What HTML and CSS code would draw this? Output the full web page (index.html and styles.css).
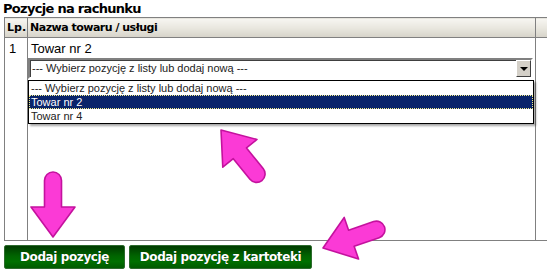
FILE: index.html
```html
<!DOCTYPE html>
<html>
<head>
<meta charset="utf-8">
<title>Pozycje na rachunku</title>
<link rel="stylesheet" href="styles.css">
</head>
<body>
<h1 class="title">Pozycje na rachunku</h1>
<table class="items">
	<thead>
		<tr>
			<th class="lp">Lp.</th>
			<th class="name">Nazwa towaru / usługi</th>
			<th class="extra"></th>
		</tr>
	</thead>
	<tbody>
		<tr>
			<td class="lp">1</td>
			<td class="name">
				<div class="item-name">Towar nr 2</div>
				<div class="combo">
					<span class="combo-text">--- Wybierz pozycję z listy lub dodaj nową ---</span>
					<span class="combo-btn"></span>
					<ul class="combo-list">
						<li>--- Wybierz pozycję z listy lub dodaj nową ---</li>
						<li class="sel">Towar nr 2</li>
						<li>Towar nr 4</li>
					</ul>
				</div>
			</td>
			<td class="extra"></td>
		</tr>
	</tbody>
</table>
<div class="actions">
	<button class="btn btn-add">Dodaj pozycję</button>
	<button class="btn btn-cat">Dodaj pozycję z kartoteki</button>
</div>

<svg class="arrows" width="547" height="274" viewBox="0 0 547 274">
	<defs>
		<!-- strzałka w dół, grot w punkcie 0,0 -->
		<path id="arrow" d="M0,0 L-22,-30 L-8.5,-30 L-8.5,-56.5 A8.5,8.5 0 0 1 8.5,-56.5 L8.5,-30 L22,-30 Z"/>
	</defs>
	<use href="#arrow" transform="translate(53,237)"/>
	<use href="#arrow" transform="translate(221,130) rotate(141)"/>
	<use href="#arrow" transform="translate(323,248) rotate(71)"/>
</svg>
</body>
</html>
```

FILE: styles.css
```css
html{overflow:hidden;}
body{margin:0; padding:0; background:#fff; font-family:"Liberation Sans", Arial, sans-serif; position:relative; width:547px; height:274px;}

.title{margin:0; padding-left:3px; font:bold 13px/17px "DejaVu Sans", Tahoma, sans-serif; letter-spacing:-0.7px; color:#000;}

.items{margin-left:4px; border-collapse:collapse; border:1px solid #808080; width:620px; table-layout:fixed;}
.items th{height:19px; padding:0 2px; text-align:left; font:bold 11px "DejaVu Sans", Tahoma, sans-serif; letter-spacing:-0.5px; color:#000;
	background:linear-gradient(#f7f6f2, #e9e7df 50%, #d6d3c9); border:1px solid #808080; border-top:0;}
.items th.lp{letter-spacing:0;}
.items td{border:1px solid #808080; vertical-align:top; height:199px; padding:0;}
.items .lp{width:18px;}
.items .name{width:503px;}
.items td.lp{padding:3px 0 0 4px; font-size:13px; line-height:16px;}
.items td.name{padding:3px 2px 0 0;}

.item-name{padding-left:3px; font-size:13px; line-height:16px; color:#000;}

.combo{position:relative; margin-top:1px; height:17px; border:2px solid; border-color:#808080 #fff #fff #808080;
	box-shadow:inset 1px 1px #404040; background:#fff; font-size:11px; line-height:17px; color:#222;}
.combo-text{padding-left:2px;}
.combo-btn{position:absolute; right:0; top:0; width:13px; height:15px; background:#d4d0c8; border:1px solid;
	border-color:#fff #404040 #404040 #fff;}
.combo-btn:after{content:""; position:absolute; left:3px; top:6px; border:4px solid transparent; border-top-color:#000; border-bottom:0;}

.combo-list{position:absolute; left:-2px; top:20px; right:-3px; margin:0; padding:0; list-style:none; background:#fff;
	border:1px solid #000; box-shadow:2px 2px 2px rgba(0,0,0,0.35); z-index:2;}
.combo-list li{height:14px; line-height:14px; padding-left:2px; color:#222;}
.combo-list .sel{background:#0a246a; color:#fff; box-sizing:border-box; border:1px dotted #f5f08a; line-height:12px; padding-left:1px;}

.actions{display:flex; gap:4px; margin:4px 0 0 4px;}
.btn{height:24px; margin:0; padding:0; font:bold 12px "DejaVu Sans", Tahoma, sans-serif; letter-spacing:-0.4px; color:#fff;
	background:linear-gradient(#003a00, #006400 45%, #007000 70%, #005a00); border:1px solid #2d6b2d; border-radius:2px;
	text-shadow:0 0 1px #002000; cursor:pointer;}
.btn-add{width:121px;}
.btn-cat{width:183px;}

.arrows{position:absolute; left:0; top:0; pointer-events:none;}
.arrows use{fill:#fb3ad6; stroke:#c4129e; stroke-width:1.6; stroke-linejoin:round;}
```
